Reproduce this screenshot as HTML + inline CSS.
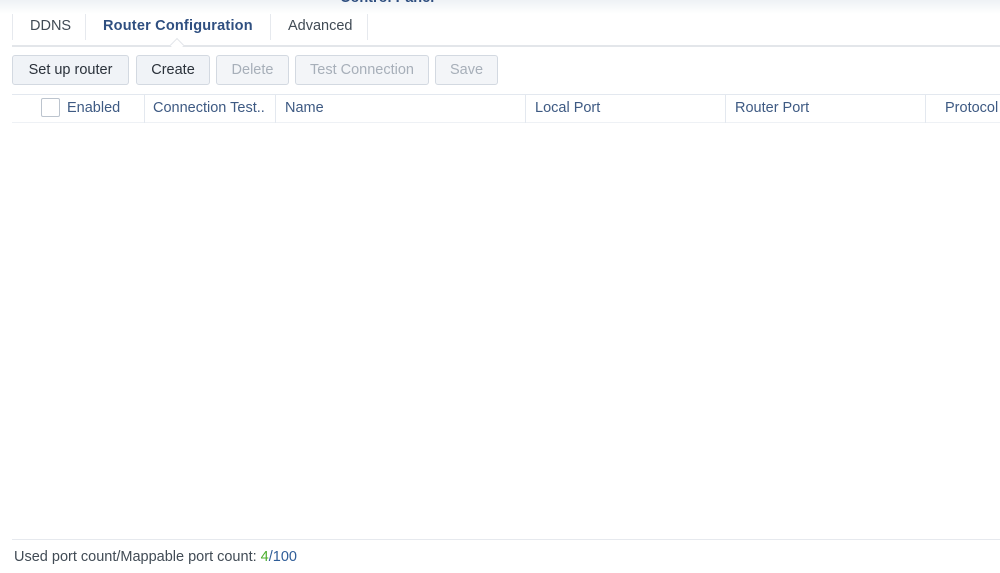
<!DOCTYPE html>
<html><head><style>
*{margin:0;padding:0;box-sizing:border-box}
body{width:1000px;height:573px;background:#fff;font-family:"Liberation Sans",sans-serif;position:relative;overflow:hidden;font-size:14.5px}
.a{position:absolute;white-space:nowrap}
.top{left:0;top:0;width:1000px;height:14px;background:linear-gradient(#eef1f5,#fff)}
.tab{top:18px;font-size:14.5px;color:#414b55}
.sep{width:1px;background:#e6e9ee;top:14px;height:26px}
.btn{top:55px;height:30px;border:1px solid #d3d9e1;border-radius:3px;background:#f0f3f7;color:#2a313a;font-size:14.5px;text-align:center;line-height:29px}
.dis{color:#a7afb9;background:#f3f5f8}
.th{top:100px;color:#3e5a83;font-size:14.5px}
.cs{top:95px;height:28px;width:1px;background:#e3e8ef}
</style></head><body>
<div class="a top"></div>
<div class="a" style="left:340px;top:-10px;color:#2f4f80;font-weight:bold;font-size:14.5px">Control Panel</div>
<div class="a sep" style="left:12px"></div>
<div class="a tab" style="left:30px">DDNS</div>
<div class="a sep" style="left:85px"></div>
<div class="a tab" style="left:103px;color:#2f4f80;font-weight:bold;letter-spacing:0.2px">Router Configuration</div>
<div class="a sep" style="left:270px"></div>
<div class="a tab" style="left:288px">Advanced</div>
<div class="a sep" style="left:367px"></div>
<div class="a" style="left:12px;top:45px;width:988px;height:2px;background:#e3e6ea"></div>
<div class="a" style="left:172px;top:40px;width:10px;height:10px;background:#fff;border-left:1px solid #e3e6ea;border-top:1px solid #e3e6ea;transform:rotate(45deg)"></div>
<div class="a btn" style="left:12px;width:117px">Set up router</div>
<div class="a btn" style="left:136px;width:74px">Create</div>
<div class="a btn dis" style="left:216px;width:73px">Delete</div>
<div class="a btn dis" style="left:295px;width:134px">Test Connection</div>
<div class="a btn dis" style="left:435px;width:63px">Save</div>
<div class="a" style="left:12px;top:94px;width:988px;height:1px;background:#e3e8ef"></div>
<div class="a" style="left:12px;top:122px;width:988px;height:1px;background:#eef1f5"></div>
<div class="a" style="left:41px;top:98px;width:19px;height:19px;border:1px solid #bcc4ce;border-radius:2px;background:#fff"></div>
<div class="a th" style="left:67px">Enabled</div>
<div class="a cs" style="left:144px"></div>
<div class="a th" style="left:153px">Connection Test..</div>
<div class="a cs" style="left:275px"></div>
<div class="a th" style="left:285px">Name</div>
<div class="a cs" style="left:525px"></div>
<div class="a th" style="left:535px">Local Port</div>
<div class="a cs" style="left:725px"></div>
<div class="a th" style="left:735px">Router Port</div>
<div class="a cs" style="left:925px"></div>
<div class="a th" style="left:945px">Protocol</div>
<div class="a" style="left:12px;top:539px;width:988px;height:1px;background:#e6e9ee"></div>
<div class="a" style="left:14px;top:549px;color:#414b55">Used port count/Mappable port count: <span style="color:#4caf2e">4</span><span style="color:#2f5d98">/100</span></div>
</body></html>
